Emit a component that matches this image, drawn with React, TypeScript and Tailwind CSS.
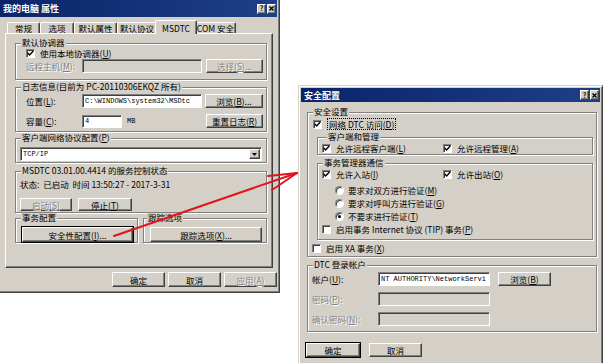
import React from "react";

const raised =
  "border border-t-white border-l-white border-r-[#404040] border-b-[#404040] shadow-[inset_-1px_-1px_0_#808080]";
const sunken =
  "border border-t-[#808080] border-l-[#808080] border-r-white border-b-white shadow-[inset_1px_1px_0_#404040]";
const dim = "text-[#808080] [text-shadow:1px_1px_0_#fff]";
const mono = "font-['Liberation_Mono',monospace] text-[7px]";

type Kids = { children?: React.ReactNode; className?: string };

function TitleBar({ title, className = "" }: { title: string; className?: string }) {
  return (
    <div
      className={`flex items-center justify-between bg-linear-to-r from-[#0a246a] to-[#1e3f88] pl-[3px] pr-[1px] ${className}`}
    >
      <span className="text-white font-bold text-[9px] leading-none">{title}</span>
      <div className="flex gap-[1px]">
        <div
          className={`w-[9px] h-[10px] bg-[#d4d0c8] ${raised} flex items-center justify-center text-[7px] font-bold leading-none text-black`}
        >
          ?
        </div>
        <div className={`w-[9px] h-[10px] bg-[#d4d0c8] ${raised} flex items-center justify-center`}>
          <svg width="5" height="5" viewBox="0 0 5 5">
            <path d="M0.5 0.5 L4.5 4.5 M4.5 0.5 L0.5 4.5" stroke="#000" strokeWidth="1.3" />
          </svg>
        </div>
      </div>
    </div>
  );
}

function Btn({
  children,
  className = "",
  disabled = false,
  isDefault = false,
}: Kids & { disabled?: boolean; isDefault?: boolean }) {
  return (
    <div
      className={`flex items-center justify-center whitespace-nowrap leading-[10px] bg-[#d4d0c8] ${raised} ${
        isDefault ? "outline outline-1 outline-black" : ""
      } ${disabled ? dim : "text-black"} ${className}`}
    >
      {children}
    </div>
  );
}

function Field({ children, className = "", disabled = false }: Kids & { disabled?: boolean }) {
  return (
    <div
      className={`${sunken} ${
        disabled ? "bg-[#d4d0c8]" : "bg-white"
      } flex items-center pl-[2px] overflow-hidden whitespace-nowrap leading-[10px] ${className}`}
    >
      {children}
    </div>
  );
}

function CheckBox({ checked = false }: { checked?: boolean }) {
  return (
    <span className={`w-[9px] h-[9px] shrink-0 bg-white ${sunken} flex items-center justify-center`}>
      {checked && (
        <svg width="7" height="7" viewBox="0 0 7 7">
          <path d="M0.8 3 L2.6 4.9 L6.3 1" fill="none" stroke="#000" strokeWidth="1.4" />
        </svg>
      )}
    </span>
  );
}

function Check({ checked = false, children, className = "" }: Kids & { checked?: boolean }) {
  return (
    <div className={`flex items-center h-[12px] gap-[5px] whitespace-nowrap ${className}`}>
      <CheckBox checked={checked} />
      <span className="leading-[10px]">{children}</span>
    </div>
  );
}

function Radio({ checked = false, children }: Kids & { checked?: boolean }) {
  return (
    <div className="flex items-center h-[12px] gap-[4px] whitespace-nowrap">
      <span className="w-[9px] h-[9px] shrink-0 rounded-full bg-white border border-t-[#808080] border-l-[#808080] border-r-white border-b-white shadow-[inset_1px_1px_0_#404040] flex items-center justify-center">
        {checked && <span className="w-[3px] h-[3px] rounded-full bg-black" />}
      </span>
      <span className="leading-[10px]">{children}</span>
    </div>
  );
}

function Group({
  title,
  children,
  className = "",
  labelClass = "left-[5px]",
}: Kids & { title: React.ReactNode; labelClass?: string }) {
  return (
    <div
      className={`relative border border-[#808080] shadow-[inset_1px_1px_0_#fff,1px_1px_0_#fff] ${className}`}
    >
      <span
        className={`absolute -top-[6px] ${labelClass} px-[1px] bg-[#d4d0c8] leading-[9px] whitespace-nowrap`}
      >
        {title}
      </span>
      {children}
    </div>
  );
}

function Tab({ children, className = "", active = false }: Kids & { active?: boolean }) {
  return (
    <div
      className={`flex items-center justify-center whitespace-nowrap leading-[10px] border-t border-l border-r border-t-white border-l-white border-r-[#404040] rounded-t-[2px] shadow-[inset_-1px_0_0_#808080] bg-[#d4d0c8] ${
        active ? "h-[14px] -mx-[2px] relative z-10" : "h-[11px] mb-[1px]"
      } ${className}`}
    >
      {children}
    </div>
  );
}

const windowFrame =
  "bg-[#d4d0c8] p-[2px] border border-t-[#d4d0c8] border-l-[#d4d0c8] border-r-[#404040] border-b-[#404040] shadow-[inset_1px_1px_0_#fff,inset_-1px_-1px_0_#808080] flex flex-col";

function PropertiesWindow() {
  return (
    <div className={`absolute left-[-3px] top-[-3px] w-[283px] h-[296px] ${windowFrame}`}>
      <TitleBar title="我的电脑 属性" className="h-[17px]" />
      <div className="pl-[5px] pr-[4px]">
        <div className="relative z-10 flex items-end h-[14px] mt-[3px] pl-[2px]">
          <Tab className="w-[33px]">常规</Tab>
          <Tab className="w-[34px]">选项</Tab>
          <Tab className="w-[43px]">默认属性</Tab>
          <Tab className="w-[40px]">默认协议</Tab>
          <Tab className="w-[42px]" active>
            MSDTC
          </Tab>
          <Tab className="w-[41px]">COM 安全</Tab>
        </div>
        <div className={`-mt-[1px] h-[235px] ${raised} pt-[9px] pl-[9px] pr-[5px] flex flex-col`}>
          <Group title="默认协调器" className="h-[37px] pt-[3px] pl-[10px] pr-[3px]">
            <Check checked>
              使用本地协调器(<u>U</u>)
            </Check>
            <div className="flex items-center h-[14px]">
              <span className={`w-[56px] leading-[10px] ${dim}`}>
                远程主机(<u>M</u>):
              </span>
              <Field disabled className="w-[120px] h-[14px]" />
              <Btn disabled className="w-[57px] h-[14px] ml-[4px]">
                选择(<u>S</u>)...
              </Btn>
            </div>
          </Group>

          <Group
            title="日志信息(目前为 PC-20110306EKQZ 所有)"
            className="h-[45px] mt-[7px] pt-[6px] pl-[10px] pr-[3px]"
          >
            <div className="flex items-center h-[14px]">
              <span className="w-[56px] leading-[10px]">
                位置(<u>L</u>):
              </span>
              <Field className={`w-[120px] h-[14px] ${mono}`}>C:\WINDOWS\system32\MSDtc</Field>
              <Btn className="w-[58px] h-[14px] ml-[3px]">
                浏览(<u>B</u>)...
              </Btn>
            </div>
            <div className="flex items-center h-[14px] mt-[6px]">
              <span className="w-[56px] leading-[10px]">
                容量(<u>C</u>):
              </span>
              <Field className={`w-[40px] h-[13px] ${mono}`}>4</Field>
              <span className={`ml-[5px] leading-[10px] ${mono}`}>MB</span>
              <Btn className="w-[57px] h-[14px] ml-auto">
                重置日志(<u>R</u>)
              </Btn>
            </div>
          </Group>

          <Group
            title={
              <>
                客户端网络协议配置(<u>P</u>)
              </>
            }
            className="h-[25px] mt-[6px] pt-[8px] px-[4px]"
          >
            <Field className="h-[14px] pr-[1px] justify-between">
              <span className={mono}>TCP/IP</span>
              <div className={`w-[11px] h-[10px] bg-[#d4d0c8] ${raised} flex items-center justify-center`}>
                <svg width="5" height="3" viewBox="0 0 5 3">
                  <path d="M0 0 H5 L2.5 3 Z" fill="#000" />
                </svg>
              </div>
            </Field>
          </Group>

          <Group
            title="MSDTC 03.01.00.4414 的服务控制状态"
            className="h-[42px] mt-[8px] pt-[6px] pl-[4px]"
          >
            <div className="h-[12px] flex items-center whitespace-pre leading-[10px]">
              状态:  已启动  时间 13:50:27 - 2017-3-31
            </div>
            <div className="flex mt-[8px] gap-[6px]">
              <Btn disabled className="w-[52px] h-[13px]">
                启动(<u>S</u>)
              </Btn>
              <Btn className="w-[54px] h-[13px]">
                停止(<u>T</u>)
              </Btn>
            </div>
          </Group>

          <div className="flex gap-[5px] mt-[5px]">
            <Group title="事务配置" className="w-[123px] h-[25px] pt-[8px] pl-[6px]">
              <Btn isDefault className="w-[111px] h-[15px]">
                安全性配置(<u>I</u>)...
              </Btn>
            </Group>
            <Group title="跟踪选项" className="w-[124px] h-[25px] pt-[8px] pl-[6px]" labelClass="left-[3px]">
              <Btn className="w-[112px] h-[15px]">
                跟踪选项(<u>X</u>)...
              </Btn>
            </Group>
          </div>
        </div>
      </div>
      <div className="flex justify-end gap-[3px] mt-[4px]">
        <Btn className="w-[53px] h-[15px]">确定</Btn>
        <Btn className="w-[53px] h-[15px]">取消</Btn>
        <Btn disabled className="w-[53px] h-[15px]">
          应用(<u>A</u>)
        </Btn>
      </div>
    </div>
  );
}

function SecurityWindow() {
  return (
    <div className={`absolute left-[298px] top-[85px] w-[305px] h-[300px] ${windowFrame}`}>
      <TitleBar title="安全配置" className="h-[14px]" />
      <div className="pl-[6px] pr-[3px]">
        <Group title="安全设置" className="h-[145px] mt-[10px] pt-[5px]">
          <div className="flex items-center h-[12px] pl-[5px] gap-[5px]">
            <CheckBox checked />
            <span className="border border-dotted border-black px-[1px] leading-[10px]">
              网络 DTC 访问(<u>D</u>)
            </span>
          </div>

          <Group
            title="客户端和管理"
            className="h-[18px] mt-[7px] ml-[9px] mr-[3px] pt-[4px] pl-[4px] flex items-start"
            labelClass="left-[9px]"
          >
            <Check checked className="w-[121px]">
              允许远程客户端(<u>L</u>)
            </Check>
            <Check checked>
              允许远程管理(<u>A</u>)
            </Check>
          </Group>

          <Group title="事务管理器通信" className="h-[77px] mt-[8px] ml-[9px] mr-[3px] pt-[4px] pl-[4px]">
            <div className="flex">
              <Check checked className="w-[121px]">
                允许入站(<u>I</u>)
              </Check>
              <Check checked>
                允许出站(<u>O</u>)
              </Check>
            </div>
            <div className="flex flex-col gap-[1px] mt-[4px] ml-[13px]">
              <Radio>
                要求对双方进行验证(<u>M</u>)
              </Radio>
              <Radio>
                要求对呼叫方进行验证(<u>G</u>)
              </Radio>
              <Radio checked>
                不要求进行验证(<u>T</u>)
              </Radio>
            </div>
            <Check className="mt-[1px]">
              启用事务 Internet 协议 (TIP) 事务(<u>P</u>)
            </Check>
          </Group>

          <Check className="mt-[2px] pl-[4px]">
            启用 XA 事务(<u>X</u>)
          </Check>
        </Group>

        <Group title="DTC 登录帐户" className="h-[67px] mt-[8px] pt-[6px] pl-[4px]">
          <div className="flex items-center h-[14px]">
            <span className="w-[66px] leading-[10px]">
              帐户(<u>U</u>):
            </span>
            <Field className={`w-[112px] h-[14px] ${mono}`}>NT AUTHORITY\NetworkServi</Field>
            <Btn className="w-[53px] h-[14px] ml-[8px]">
              浏览(<u>B</u>)
            </Btn>
          </div>
          <div className="flex items-center h-[14px] mt-[6px]">
            <span className={`w-[66px] leading-[10px] ${dim}`}>
              密码(<u>P</u>):
            </span>
            <Field disabled className="w-[112px] h-[14px]" />
          </div>
          <div className="flex items-center h-[14px] mt-[6px]">
            <span className={`w-[66px] leading-[10px] ${dim}`}>
              确认密码(<u>N</u>):
            </span>
            <Field disabled className="w-[112px] h-[14px]" />
          </div>
        </Group>
      </div>
      <div className="flex gap-[9px] mt-[11px] pl-[5px]">
        <Btn isDefault className="w-[54px] h-[14px]">
          确定
        </Btn>
        <Btn className="w-[53px] h-[14px]">取消</Btn>
      </div>
    </div>
  );
}

export default function App() {
  return (
    <div className="relative w-[604px] h-[363px] overflow-hidden bg-white text-black text-[8.5px] leading-[12px] font-['Noto_Sans_CJK_SC','Liberation_Sans',sans-serif]">
      <PropertiesWindow />
      <SecurityWindow />
      <svg
        className="absolute left-0 top-0 z-20 pointer-events-none"
        width="604"
        height="363"
        viewBox="0 0 604 363"
      >
        <g stroke="#e3141c" strokeWidth="2" strokeLinecap="round" fill="none">
          <path d="M114 236 L297 173" />
          <path d="M297 173 L268 176" />
          <path d="M297 173 L272 190" />
        </g>
      </svg>
    </div>
  );
}
